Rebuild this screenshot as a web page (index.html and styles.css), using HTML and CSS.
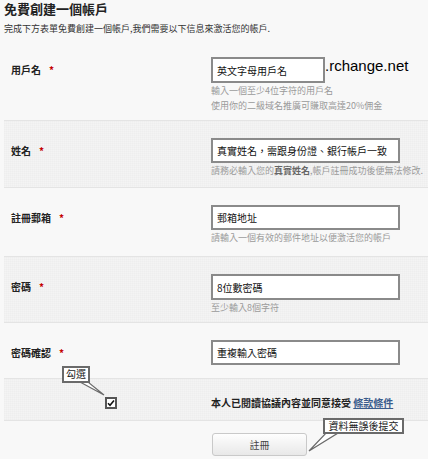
FILE: index.html
```html
<!DOCTYPE html>
<html lang="zh-Hant">
<head>
<meta charset="utf-8">
<title>免費創建一個帳戶</title>
<link rel="stylesheet" href="styles.css">
</head>
<body>
<div class="page">
  <h1 class="title">免費創建一個帳戶</h1>
  <p class="intro">完成下方表單免費創建一個帳戶,我們需要以下信息來激活您的帳戶.</p>
  <form class="form">
    <div class="row r1">
      <div class="label">用戶名<span class="req">*</span></div>
      <div class="field">
        <div class="line"><input class="box short" type="text" value="英文字母用戶名"><span class="domain">.rchange.net</span></div>
        <div class="help">輸入一個至少4位字符的用戶名</div>
        <div class="help">使用你的二級域名推廣可賺取高達20%佣金</div>
      </div>
    </div>
    <div class="row alt r2">
      <div class="label">姓名<span class="req">*</span></div>
      <div class="field">
        <input class="box" type="text" value="真實姓名，需跟身份證、銀行帳戶一致">
        <div class="help">請務必輸入您的<b class="em">真實姓名</b>,帳戶註冊成功後便無法修改.</div>
      </div>
    </div>
    <div class="row r3">
      <div class="label">註冊郵箱<span class="req">*</span></div>
      <div class="field">
        <input class="box" type="text" value="郵箱地址">
        <div class="help">請輸入一個有效的郵件地址以便激活您的帳戶</div>
      </div>
    </div>
    <div class="row alt r4">
      <div class="label">密碼<span class="req">*</span></div>
      <div class="field">
        <input class="box tall" type="text" value="8位數密碼">
        <div class="help">至少輸入8個字符</div>
      </div>
    </div>
    <div class="row r5">
      <div class="label">密碼確認<span class="req">*</span></div>
      <div class="field">
        <input class="box" type="text" value="重複輸入密碼">
      </div>
    </div>
    <div class="row alt agree">
      <div class="check-cell">
        <span class="checkbox"><svg width="8" height="8" viewBox="0 0 8 8"><path d="M1 4.2 L3 6.2 L7 1.5" fill="none" stroke="#111" stroke-width="1.6"/></svg></span>
      </div>
      <div class="agree-text">本人已閱讀協議內容並同意接受 <a class="link" href="#">條款條件</a></div>
    </div>
    <div class="row submit">
      <div class="label"></div>
      <button class="btn" type="button">註冊</button>
    </div>
  </form>
</div>
<svg class="tails" width="428" height="459" viewBox="0 0 428 459">
  <polygon points="80,382 88,382 104,395" fill="#fff" stroke="#6a6a6a" stroke-width="1.2"/>
  <polygon points="326,433 338,433 309,451" fill="#fff" stroke="#6a6a6a" stroke-width="1.2"/>
</svg>
<div class="callout c1">勾選</div>
<div class="callout c2">資料無誤後提交</div>
</body>
</html>
```

FILE: styles.css
```css
html, body {
  margin: 0;
  padding: 0;
  background: #f8f8f8;
  overflow: hidden;
}

.page {
  padding-left: 4px;
  font-family: "Noto Sans CJK TC", "Noto Sans", sans-serif;
  color: #222;
}

.title {
  margin: 0;
  font-size: 13px;
  line-height: 18px;
  font-weight: bold;
  color: #222;
}

.intro {
  margin: 4px 0;
  font-size: 9px;
  line-height: 14px;
  color: #333;
  white-space: nowrap;
}

.form {
  margin: 0;
}

.row {
  display: flex;
  box-sizing: border-box;
  padding-top: 17px;
  border-bottom: 1px solid #e4e4e4;
}

.row.alt {
  background-color: #f4f4f4;
  background-image:
    linear-gradient(rgba(0, 0, 0, 0.012) 1px, transparent 1px),
    linear-gradient(90deg, rgba(0, 0, 0, 0.012) 1px, transparent 1px);
  background-size: 2px 2px;
}

.r1 { height: 81px; }
.r2 { height: 67px; }
.r3 { height: 69px; }
.r4 { height: 66px; }
.r5 { height: 56px; }

.label {
  flex: none;
  width: 207px;
  box-sizing: border-box;
  padding-left: 7px;
  font-size: 10px;
  font-weight: bold;
  line-height: 25px;
  color: #222;
}

.req {
  color: #c40000;
  margin-left: 8px;
  font-size: 10px;
}

.field {
  flex: 1;
  min-width: 0;
}

.line {
  display: flex;
  align-items: flex-start;
}

.box {
  display: block;
  width: 189px;
  height: 25px;
  margin: 0;
  box-sizing: border-box;
  border: 2px solid #8a8a8a;
  background: #fff;
  padding: 0 4px;
  font-family: "Noto Sans CJK TC", "Noto Sans", sans-serif;
  font-size: 10px;
  color: #111;
  outline: none;
}

.box.short {
  width: 114px;
  height: 26px;
}

.box.tall {
  height: 26px;
}

.domain {
  font-family: "Liberation Sans", Arial, sans-serif;
  font-size: 15px;
  line-height: 17px;
  color: #000;
}

.help {
  font-size: 9px;
  line-height: 15px;
  color: #9a9a9a;
  white-space: nowrap;
}

.help .em {
  color: #666;
  font-weight: bold;
}

.row.agree {
  height: 42px;
  padding-top: 6px;
  align-items: center;
}

.check-cell {
  flex: none;
  width: 207px;
  box-sizing: border-box;
  padding-left: 101px;
}

.checkbox {
  display: flex;
  align-items: center;
  justify-content: center;
  width: 12px;
  height: 12px;
  box-sizing: border-box;
  border: 2px solid #555;
  background: #fff;
}

.agree-text {
  font-size: 10px;
  font-weight: bold;
  color: #222;
  white-space: nowrap;
}

.link {
  color: #3b5c8c;
  text-decoration: underline;
}

.row.submit {
  height: 38px;
  padding-top: 12px;
  border-bottom: none;
}

.btn {
  margin: 0 0 0 1px;
  width: 95px;
  height: 23px;
  border: 1px solid #c9c9c9;
  border-radius: 3px;
  background: linear-gradient(#fefefe, #e8e8e8);
  font-family: "Noto Sans CJK TC", "Noto Sans", sans-serif;
  font-size: 10px;
  color: #444;
  padding: 0;
}

.tails {
  position: absolute;
  left: 0;
  top: 0;
  pointer-events: none;
}

.callout {
  position: absolute;
  box-sizing: border-box;
  background: #fff;
  border: 2px solid #6a6a6a;
  font-family: "Noto Sans CJK TC", "Noto Sans", sans-serif;
  font-size: 10px;
  line-height: 12px;
  color: #222;
  white-space: nowrap;
  text-align: center;
}

.c1 {
  left: 62px;
  top: 366px;
  width: 28px;
  height: 17px;
}

.c2 {
  left: 323px;
  top: 418px;
  width: 81px;
  height: 16px;
}
```
